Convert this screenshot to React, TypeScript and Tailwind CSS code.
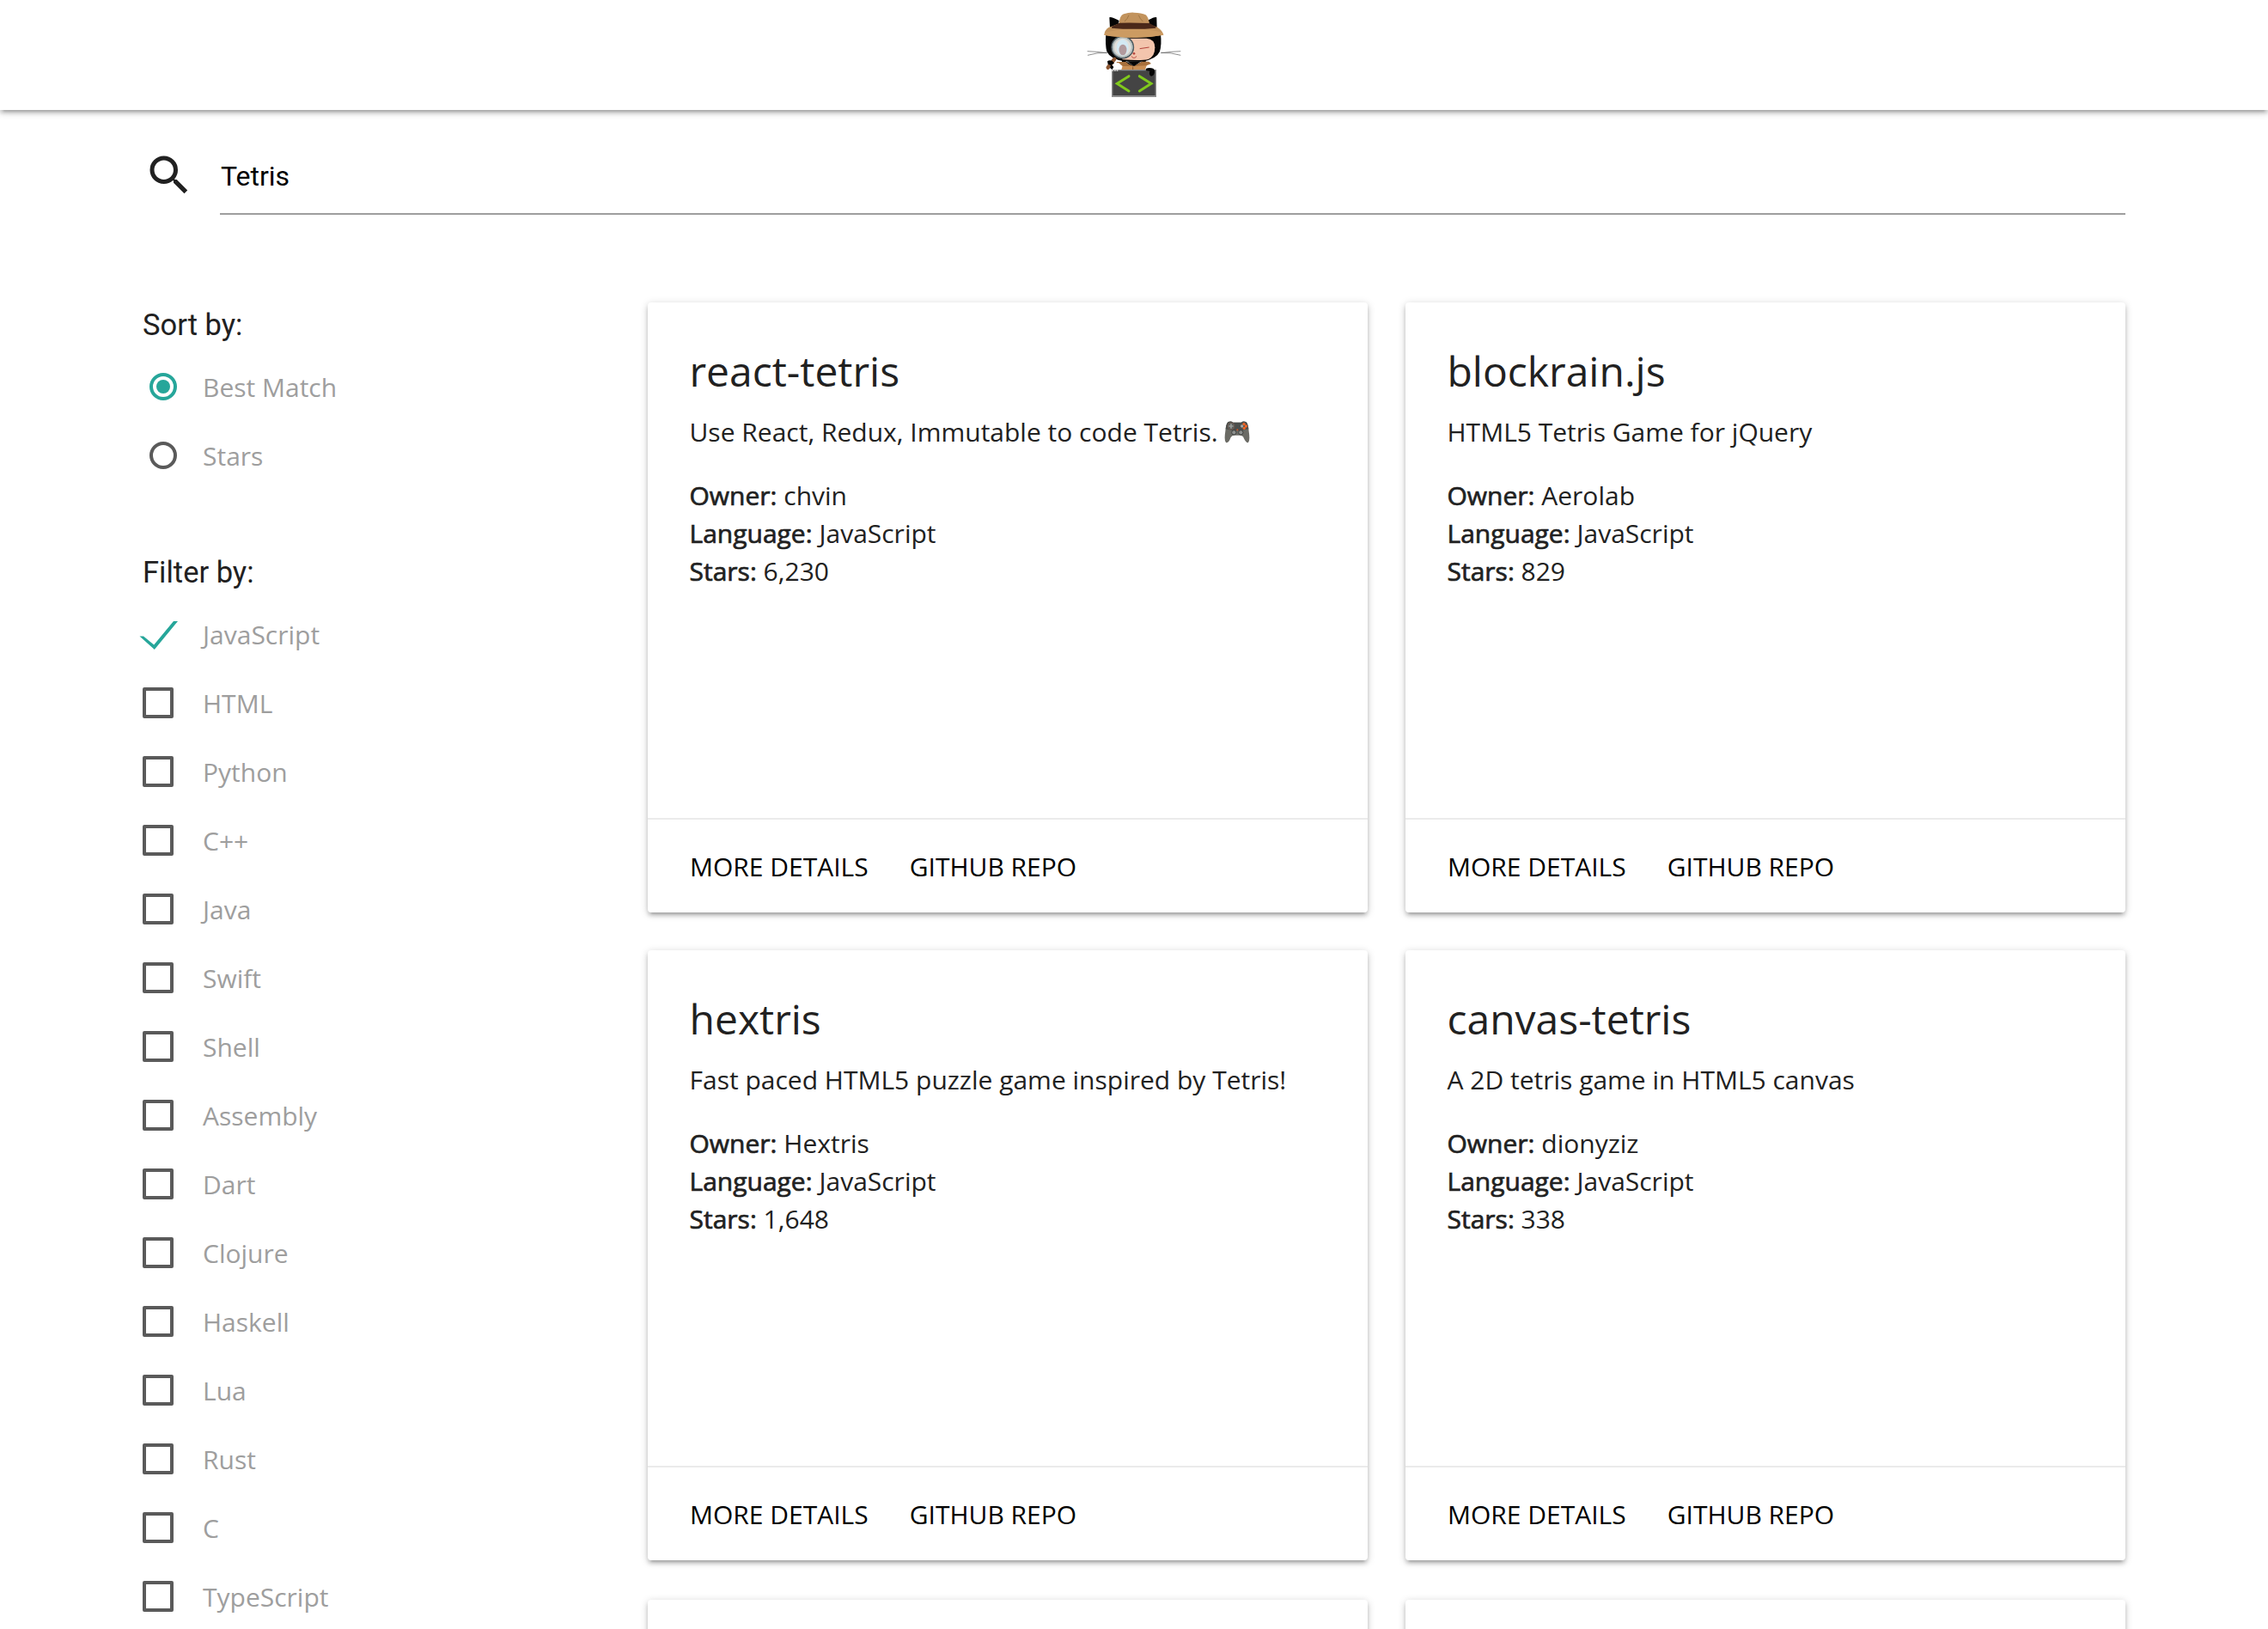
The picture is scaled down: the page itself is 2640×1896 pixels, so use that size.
const LANGUAGES = [
  'JavaScript', 'HTML', 'Python', 'C++', 'Java', 'Swift', 'Shell', 'Assembly',
  'Dart', 'Clojure', 'Haskell', 'Lua', 'Rust', 'C', 'TypeScript',
];

type Repo = {
  name: string;
  description: string;
  owner: string;
  stars: string;
  gamepad?: boolean;
};

const REPOS: Repo[] = [
  { name: 'react-tetris', description: 'Use React, Redux, Immutable to code Tetris.', owner: 'chvin', stars: '6,230', gamepad: true },
  { name: 'blockrain.js', description: 'HTML5 Tetris Game for jQuery', owner: 'Aerolab', stars: '829' },
  { name: 'hextris', description: 'Fast paced HTML5 puzzle game inspired by Tetris!', owner: 'Hextris', stars: '1,648' },
  { name: 'canvas-tetris', description: 'A 2D tetris game in HTML5 canvas', owner: 'dionyziz', stars: '338' },
];

function Logo() {
  return (
    <svg viewBox="0 0 480 384" className="h-[128px] w-[160px]" aria-label="Octocat detective">
      <g fill="none" stroke="#555" strokeWidth="2">
        <path d="M77 179Q110 180 146 185M78 193Q110 183 146 184M403 179Q370 180 334 185M403 193Q370 183 334 184" />
      </g>
      <path d="M154 61Q158 56 188 72L180 110L156 98ZM319 61Q315 56 290 70L298 110L320 98Z" fill="#050505" />
      <path d="M142 118Q139 160 145 180Q158 207 206 214L270 215Q318 206 330 180Q337 155 333 118Z" fill="#050505" />
      <path d="M196 206Q218 216 240 230Q262 218 284 206L270 246H205Z" fill="#050505" />
      <path d="M215 134H284Q313 136 313 166Q313 197 290 207Q265 213 200 208Q190 190 196 160Z" fill="#f3c5ad" />
      <path d="M260 170L293 165" stroke="#b5443c" strokeWidth="3" />
      <circle cx="240" cy="187" r="4" fill="#b5443c" />
      <path d="M232 196Q233 203 240 202Q247 203 248 196" fill="none" stroke="#b5443c" strokeWidth="2.5" />
      <path d="M174 222L188 218Q205 218 208 230L222 233L208 240L200 243H175ZM306 222L290 222Q275 222 279 232L283 241H300Z" fill="#fff" />
      <path d="M178 216L212 216L222 224L240 231L268 215H292L300 222L284 229L276 243H198L200 233L186 224Z" fill="#a8703c" />
      <path d="M170 224L186 219L200 231L201 241L176 244Z" fill="#fff" />
      <path d="M200 231L238 231L284 229L279 243H196Z" fill="#c98f55" />
      <path d="M215 214L240 231L266 214Z" fill="#050505" />
      <path d="M236 233V243" stroke="#704522" strokeWidth="2" />
      <path d="M172 206L149 236" stroke="#8c5632" strokeWidth="13" strokeLinecap="round" />
      <circle cx="200" cy="165" r="38" fill="#d3d9d8" stroke="#4c5a60" strokeWidth="5" />
      <circle cx="200" cy="165" r="33" fill="#e0dfda" stroke="#b6c0c0" strokeWidth="5" />
      <ellipse cx="200" cy="166" rx="21" ry="28" fill="#d3e9f3" />
      <ellipse cx="201" cy="174" rx="13.500" ry="19" fill="#b19a9d" />
      <path d="M147 214Q153 208 164 212L171 221L162 226L169 234L164 243L156 237L159 228L149 224Z" fill="#050505" />
      <path d="M137 115Q143 97 158 94L188 82Q190 54 204 49Q222 43 240 44Q266 44 281 52Q291 60 294 85L322 95Q339 106 343 122Q290 132 239 131Q175 130 137 122Z" fill="#c2935d" />
      <path d="M140 113Q200 99 240 100Q300 101 340 115L343 122Q290 132 239 131Q170 130 135 122Z" fill="#cc9b62" />
      <path d="M188 80Q240 79 294 81L316 93V98Q240 105 162 98L163 92Q174 88 188 80Z" fill="#4a2819" />
      <path d="M222 53Q218 65 207 75M256 53Q261 66 271 75" fill="none" stroke="#906636" strokeWidth="2" />
      <path d="M162 243H318V339H162Z" fill="#8c8c8c" />
      <path d="M166 247H314V333H166Z" fill="#444" />
      <path d="M163 246H187" stroke="#e8e8e8" strokeWidth="4" strokeDasharray="5 3" />
      <path d="M222 266L181 292L222 318M259 266L300 292L259 318" fill="none" stroke="#80c91c" strokeWidth="9" strokeLinecap="round" />
      <path d="M281 240Q291 235 301 238Q314 240 312 253Q309 266 300 266Q291 262 295 248L282 247Z" fill="#050505" />
    </svg>
  );
}

function Gamepad() {
  return (
    <svg viewBox="0 0 90 78" className="ml-[7px] inline-block h-[26px] w-[30px] align-[-2px]" aria-label="Video game">
      <path d="M14 3Q24 -1 31 5H59Q67 -1 77 4Q84 9 86 36Q91 69 84 75Q76 79 66 55Q62 50 55 50H35Q28 50 23 57Q15 79 6 75Q-1 68 4 36Q6 8 14 3Z" fill="#6b6b65" />
      <path d="M14 3Q24 -1 31 5H59Q67 -1 77 4Q82 8 85 28Q64 34 45 34Q26 34 5 28Q7 8 14 3Z" fill="#4b4f4d" />
      <circle cx="24" cy="18" r="12" fill="#5a5f5d" stroke="#75574b" strokeWidth="2" />
      <path d="M24 10V26M16 18H32" stroke="#9a9d9a" strokeWidth="5" />
      <circle cx="34" cy="40" r="8" fill="#8b8e8c" stroke="#3e403e" strokeWidth="3" />
      <circle cx="58" cy="40" r="8" fill="#8b8e8c" stroke="#3e403e" strokeWidth="3" />
      <circle cx="69" cy="11" r="5" fill="#f26322" />
      <circle cx="76" cy="18" r="5" fill="#f26322" />
      <circle cx="70" cy="25" r="5" fill="#f26322" />
      <circle cx="62" cy="18" r="5" fill="#a3aaa7" />
      <circle cx="46" cy="31" r="3" fill="#d65425" />
    </svg>
  );
}

function Field({ name, value }: { name: string; value: string }) {
  return (
    <p>
      <span className="[-webkit-text-stroke:0.7px_#212121]">{name}:</span> {value}
    </p>
  );
}

function Card({ repo }: { repo: Repo }) {
  return (
    <article className="flex h-[710px] flex-col rounded-[4px] bg-white shadow-[0_4px_4px_0_rgba(0,0,0,0.14),0_6px_2px_-4px_rgba(0,0,0,0.12),0_2px_10px_0_rgba(0,0,0,0.2)]">
      <div className="flex-1 pt-[48px] pr-[48px] pl-[48.5px]">
        <h2 className="text-[48px] leading-[64px]">{repo.name}</h2>
        <p className="mt-[17px] text-[30px] leading-[44px]">
          {repo.description}
          {repo.gamepad && <Gamepad />}
        </p>
        <div className="mt-[30px] text-[30px] leading-[44px]">
          <Field name="Owner" value={repo.owner} />
          <Field name="Language" value="JavaScript" />
          <Field name="Stars" value={repo.stars} />
        </div>
      </div>
      <div className="flex h-[110px] items-center gap-[48px] border-t-2 border-[#ebebeb] pr-[48px] pl-[49px] text-[30px] text-black uppercase">
        <a>More details</a>
        <a>GitHub repo</a>
      </div>
    </article>
  );
}

function EmptyCard() {
  return (
    <article className="mt-[2px] h-[710px] rounded-[4px] bg-white shadow-[0_4px_4px_0_rgba(0,0,0,0.14),0_6px_2px_-4px_rgba(0,0,0,0.12),0_2px_10px_0_rgba(0,0,0,0.2)]" />
  );
}

export default function App() {
  return (
    <div className="h-[1896px] overflow-hidden bg-white font-['Open_Sans',sans-serif] text-[#212121]">
      <header className="flex h-[128px] justify-center bg-white shadow-[0_4px_4px_0_rgba(0,0,0,0.14),0_6px_2px_-4px_rgba(0,0,0,0.12),0_2px_10px_0_rgba(0,0,0,0.2)]">
        <Logo />
      </header>
      <main className="px-[166px]">
        <div className="flex h-[224px] pt-[32px]">
          <svg viewBox="0 0 24 24" className="mt-[14px] ml-[0.5px] h-[60px] w-[60px] shrink-0" fill="#212121">
            <path d="M15.500 14h-.790l-.280-.270A6.471 6.471 0 0 0 16 9.500 6.500 6.500 0 1 0 9.500 16c1.610 0 3.090-.590 4.230-1.570l.270.280v.790l5 4.990L20.490 19l-4.990-5zm-6 0C7.010 14 5 11.990 5 9.500S7.010 5 9.500 5 14 7.010 14 9.500 11.990 14 9.500 14z" />
          </svg>
          <div className="ml-[29.5px] flex h-[90px] flex-1 items-center border-b-2 border-[#9e9e9e] pt-[1px] pl-[1px] font-[Roboto,sans-serif] text-[32px] text-black">
            Tetris
          </div>
        </div>
        <div className="flex">
          <aside className="w-[588px] shrink-0 text-[#9e9e9e]">
            <h3 className="h-[73px] pt-[4px] font-[Roboto,sans-serif] text-[34.5px] leading-[44px] text-[#212121]">Sort by:</h3>
            {['Best Match', 'Stars'].map((label, i) => (
              <label key={label} className="flex h-[80px] items-start pl-[8px]">
                <span className={i === 0
                  ? 'mt-[9px] flex size-[32px] items-center justify-center rounded-full border-4 border-[#26a69a]'
                  : 'mt-[9px] flex size-[32px] items-center justify-center rounded-full border-4 border-[#5a5a5a]'}>
                  {i === 0 && <span className="size-[16px] rounded-full bg-[#26a69a]" />}
                </span>
                <span className="ml-[30px] pt-[1px] text-[30px] leading-[50px]">{label}</span>
              </label>
            ))}
            <h3 className="mt-[50px] h-[78px] pt-[9px] font-[Roboto,sans-serif] text-[34.5px] leading-[44px] text-[#212121]">Filter by:</h3>
            {LANGUAGES.map((label, i) => (
              <label key={label} className="flex h-[80px] items-start">
                {i === 0 ? (
                  <svg viewBox="0 0 45 34" className="mt-[9px] -mr-[5px] -ml-[4px] h-[34px] w-[45px]" fill="#26a69a">
                    <path d="M0.500 18.500H5L17.200 28.500L40 1H45L17.800 34Z" />
                  </svg>
                ) : (
                  <span className="mt-[7px] size-[36px] rounded-[2px] border-4 border-[#5a5a5a]" />
                )}
                <span className="ml-[34px] pt-[1px] text-[30px] leading-[50px]">{label}</span>
              </label>
            ))}
          </aside>
          <section className="grid flex-1 grid-cols-2 gap-[44px]">
            {REPOS.map((repo) => <Card key={repo.name} repo={repo} />)}
            <EmptyCard />
            <EmptyCard />
          </section>
        </div>
      </main>
    </div>
  );
}
